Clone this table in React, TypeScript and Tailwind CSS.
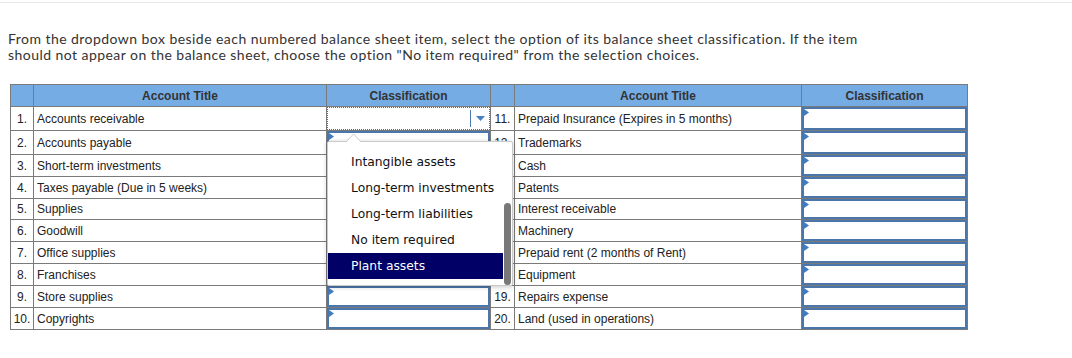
import React from 'react';

// Numbered balance sheet items, two per row (left and right halves of the grid)
const items: [string, string, string, string][] = [
    ['1.', 'Accounts receivable', '11.', 'Prepaid Insurance (Expires in 5 months)'],
    ['2.', 'Accounts payable', '12.', 'Trademarks'],
    ['3.', 'Short-term investments', '13.', 'Cash'],
    ['4.', 'Taxes payable (Due in 5 weeks)', '14.', 'Patents'],
    ['5.', 'Supplies', '15.', 'Interest receivable'],
    ['6.', 'Goodwill', '16.', 'Machinery'],
    ['7.', 'Office supplies', '17.', 'Prepaid rent (2 months of Rent)'],
    ['8.', 'Franchises', '18.', 'Equipment'],
    ['9.', 'Store supplies', '19.', 'Repairs expense'],
    ['10.', 'Copyrights', '20.', 'Land (used in operations)'],
];

// row heights, matching the rendered table
const rowHeights = ['h-[24px]', 'h-[24px]', 'h-[22px]', 'h-[22px]', 'h-[21px]', 'h-[22px]', 'h-[22px]', 'h-[22px]', 'h-[22px]', 'h-[22px]'];

const options = ['Intangible assets', 'Long-term investments', 'Long-term liabilities', 'No item required', 'Plant assets'];

const cell = 'border-r border-b border-[#7a7a7a] flex items-center';

function Marker() {
    return (
        <svg className="absolute left-0 top-0" width="5" height="7" viewBox="0 0 5 7">
            <polygon points="0,0 5,3.5 0,7" fill="#3f7cc4" />
        </svg>
    );
}

function InputBox() {
    return (
        <div className="relative h-full w-full border-2 border-[#4b76ab] bg-white">
            <Marker />
        </div>
    );
}

function SelectBox() {
    return (
        <div className="flex h-full w-full items-stretch border border-dotted border-[#3b73b9] bg-white">
            <div className="flex-1" />
            <div className="my-[2px] w-px bg-[#4a7bb8]" />
            <div className="flex w-[18px] items-center justify-center">
                <svg width="9" height="5" viewBox="0 0 9 5">
                    <polygon points="0,0 9,0 4.5,5" fill="#4a80c4" />
                </svg>
            </div>
        </div>
    );
}

function Dropdown() {
    return (
        <div className="absolute left-[317px] top-[57px] h-[145px] w-[186px] rounded-[2px] border border-[#c9c9c9] bg-white shadow-[0_1px_5px_rgba(0,0,0,0.22)]">
            {/* little pointer above the list */}
            <svg className="absolute -top-[9px] left-[17px]" width="17" height="10" viewBox="0 0 17 10">
                <polygon points="0.5,9.5 8.5,1 16.5,9.5" fill="#ffffff" stroke="#c9c9c9" />
                <rect x="0" y="9" width="17" height="1" fill="#ffffff" />
            </svg>
            <div className="flex h-full">
                <ul className="w-[175px] pt-[7px] font-['DejaVu_Sans',sans-serif] text-[12.3px]">
                    {options.map((o) => (
                        <li
                            key={o}
                            className={
                                o === 'Plant assets'
                                    ? 'flex h-[26px] items-center bg-[#000066] pl-[23px] text-white'
                                    : 'flex h-[26px] items-center pl-[23px] text-[#111]'
                            }
                        >
                            {o}
                        </li>
                    ))}
                </ul>
                <div className="relative flex-1">
                    <div className="absolute bottom-0 left-px top-[61px] w-[7px] rounded-full bg-[#787878]" />
                </div>
            </div>
        </div>
    );
}

export default function App() {
    return (
        <div className="min-h-screen bg-white pt-[2px]">
            <div className="border-t border-[#e8e8e8]" />
            <p className="ml-[8px] mt-[28px] w-[870px] font-['Lato',sans-serif] text-[14px] leading-[16px] tracking-[0.45px] text-[#333]">
                From the dropdown box beside each numbered balance sheet item, select the option of its balance sheet
                classification. If the item should not appear on the balance sheet, choose the option "No item required"
                from the selection choices.
            </p>

            <div className="relative ml-[10px] mt-[21px] w-[958px] font-['Liberation_Sans',Arial,sans-serif] text-[12px] text-[#222]">
                <div className="grid grid-cols-[23px_293px_164px_24px_287px_166px] border-l border-t border-[#7a7a7a]">
                    {/* header */}
                    <div className={`${cell} h-[22px] bg-[#75ace4]`} />
                    <div className={`${cell} h-[22px] justify-center bg-[#75ace4] font-bold text-[#333]`}>Account Title</div>
                    <div className={`${cell} h-[22px] justify-center bg-[#75ace4] font-bold text-[#333]`}>Classification</div>
                    <div className={`${cell} h-[22px] bg-[#75ace4]`} />
                    <div className={`${cell} h-[22px] justify-center bg-[#75ace4] font-bold text-[#333]`}>Account Title</div>
                    <div className={`${cell} h-[22px] justify-center bg-[#75ace4] font-bold text-[#333]`}>Classification</div>

                    {items.map(([n1, t1, n2, t2], i) => (
                        <React.Fragment key={n1}>
                            <div className={`${cell} ${rowHeights[i]} justify-center`}>{n1}</div>
                            <div className={`${cell} ${rowHeights[i]} pl-[3px]`}>{t1}</div>
                            <div className={`${cell} ${rowHeights[i]}`}>{i === 0 ? <SelectBox /> : <InputBox />}</div>
                            <div className={`${cell} ${rowHeights[i]} justify-center`}>{n2}</div>
                            <div className={`${cell} ${rowHeights[i]} pl-[3px]`}>{t2}</div>
                            <div className={`${cell} ${rowHeights[i]}`}>
                                <InputBox />
                            </div>
                        </React.Fragment>
                    ))}
                </div>
                <Dropdown />
            </div>
        </div>
    );
}
